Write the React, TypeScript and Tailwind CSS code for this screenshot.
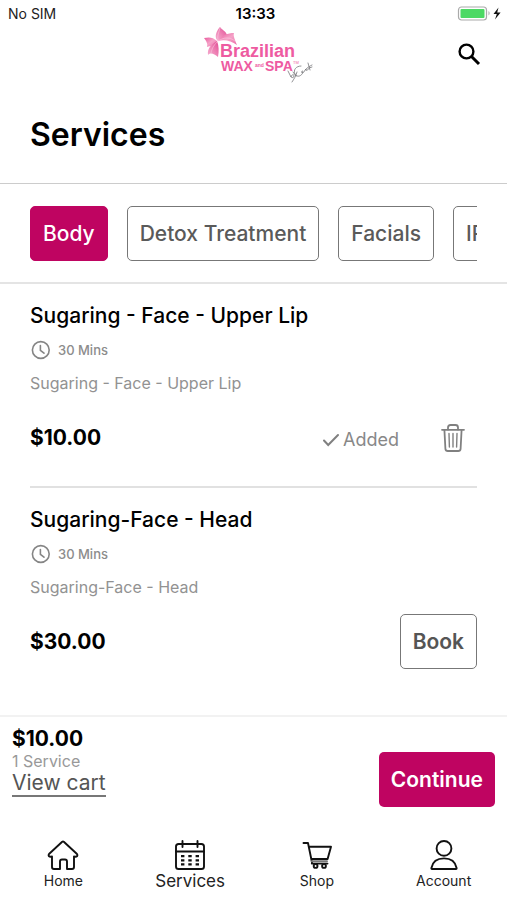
import type { ReactNode } from "react";

type Service = {
  name: string;
  duration: string;
  description: string;
  price: string;
  added: boolean;
};

const categories = ["Body", "Detox Treatment", "Facials", "IPL"];

const services: Service[] = [
  {
    name: "Sugaring - Face - Upper Lip",
    duration: "30 Mins",
    description: "Sugaring - Face - Upper Lip",
    price: "$10.00",
    added: true,
  },
  {
    name: "Sugaring-Face - Head",
    duration: "30 Mins",
    description: "Sugaring-Face - Head",
    price: "$30.00",
    added: false,
  },
];

function Logo() {
  return (
    <svg
      className="overflow-visible"
      width="113"
      height="55"
      viewBox="-3 4 113 55"
      role="img"
      aria-label="Brazilian Wax and Spa"
    >
      <defs>
        <linearGradient id="petal" x1="0" y1="0" x2="1" y2="1">
          <stop offset="0" stopColor="#e9589c" />
          <stop offset="0.5" stopColor="#f5a3c8" />
          <stop offset="1" stopColor="#ec6ba8" />
        </linearGradient>
        <linearGradient id="petalDark" x1="1" y1="0" x2="0" y2="1">
          <stop offset="0" stopColor="#e14b93" />
          <stop offset="0.6" stopColor="#f08cbb" />
          <stop offset="1" stopColor="#f5aed0" />
        </linearGradient>
      </defs>
      <path d="M17 16C14 12 17 6 20 3C22 6 26 7 27 11C24 12 20 14 18 17Z" fill="url(#petalDark)" />
      <path d="M18 17C22 11 28 9 34 9C33 12 35 16 37 21C31 17 25 15 18 17Z" fill="url(#petal)" />
      <path d="M17 17C13 13 9 13 4 14C6 17 8 19 7 23C11 22 15 21 17 17Z" fill="url(#petal)" />
      <path d="M17 17C12 20 7 24 8 31C11 28 14 30 18 33C19 27 19 22 17 17Z" fill="url(#petalDark)" />
      <path d="M18 16C17 12 19 8 20 4M18 17C24 13 30 13 35 17M17 18C13 22 12 25 11 29" stroke="#fbd3e5" strokeWidth="0.5" fill="none" />
      <g fill="#ee5ba1" fontFamily="'Liberation Sans', Arial, sans-serif" fontWeight="700">
        <text x="20" y="33" fontSize="18">Brazilian</text>
        <text x="21" y="47" fontSize="14">WAX</text>
        <text x="55" y="43" fontSize="5">and</text>
        <text x="65" y="47" fontSize="14">SPA</text>
        <text x="93" y="40" fontSize="4" fontWeight="400">TM</text>
      </g>
      <g stroke="#77777b" strokeWidth="0.8" fill="none" strokeLinecap="round">
        <path d="M88 47L91 53C92 50 94 50 94 52C94 54 92 54 91 53M93 48L96 52M97 48C96 52 94 55 92 58" />
        <path d="M101 42C96 42 93 46 95 50C97 54 102 52 103 48C103 46 101 47 102 49C104 49 105 46 106 45C106 48 108 46 109 44L112 43M108 39L110 46M105 46C108 43 110 42 112 41" />
      </g>
    </svg>
  );
}

function StatusBar() {
  return (
    <div className="grid h-7 grid-cols-3 items-center pr-1 pl-2 text-sm text-[#222]">
      <span>No SIM</span>
      <span className="text-center text-[15px] font-semibold text-black">13:33</span>
      <svg className="justify-self-end" width="46" height="16" viewBox="0 1 46 16" aria-hidden="true">
        <rect x="1.5" y="2" width="28" height="13" rx="3" fill="#fff" stroke="#aaa" strokeWidth="1.2" />
        <rect x="3.5" y="4" width="24" height="9" rx="1" fill="#4cd964" />
        <path d="M31.5 6C33 6.7 33 9.8 31.5 10.5Z" fill="#aaa" />
        <path d="M41.5 2.5L36.5 9.1H39.8L38 14.5L43.6 7.5H40.2Z" fill="#111" />
      </svg>
    </div>
  );
}

function ClockIcon() {
  return (
    <svg width="20" height="20" viewBox="0 0 20 20" fill="none" stroke="#858585" strokeWidth="1.6" aria-hidden="true">
      <circle cx="10.8" cy="10" r="8.4" />
      <path d="M10.4 5.5V10.3L14 13.2" strokeLinecap="round" />
    </svg>
  );
}

function TrashIcon() {
  return (
    <svg width="24" height="30" viewBox="0 0 24 30" fill="none" stroke="#808080" strokeWidth="1.8" strokeLinecap="round" strokeLinejoin="round" aria-hidden="true">
      <path d="M1 6.8H23M3.4 6.8L4.4 25.8Q4.6 28 6.8 28H17.2Q19.4 28 19.6 25.8L20.6 6.8" />
      <path d="M7 6.5V4.5Q7 2 9.5 2H14.5Q17 2 17 4.5V6.5" />
      <path d="M8 10.5L8.4 24M12 10.5V24M16 10.5L15.6 24" strokeWidth="1.4" />
    </svg>
  );
}

function ServiceItem({ service }: { service: Service }) {
  return (
    <li className="border-b-2 border-[#e1e1e1] pt-4 pb-[21px] last:border-transparent">
      <h2 className="text-[21px] leading-8 font-medium text-black">{service.name}</h2>
      <div className="mt-2 flex items-center gap-2 text-[13px] leading-5 font-medium text-[#8c8c8c]">
        <ClockIcon />
        <span>{service.duration}</span>
      </div>
      <p className="mt-3 text-base leading-[22px] text-[#929292]">{service.description}</p>
      <div className="mt-4 flex h-[55px] items-center justify-between">
        <span className="text-[21px] font-bold text-black">{service.price}</span>
        {service.added ? (
          <div className="flex items-center gap-[42px] pr-3">
            <span className="flex items-center gap-1 pt-1 text-lg text-[#888]">
              <svg width="16" height="14" viewBox="0 0 16 14" fill="none" stroke="#808080" strokeWidth="2" aria-hidden="true">
                <path d="M1 7.5L5.2 12L15 2" strokeLinecap="round" />
              </svg>
              Added
            </span>
            <button type="button" aria-label="Remove service">
              <TrashIcon />
            </button>
          </div>
        ) : (
          <button
            type="button"
            className="h-[55px] rounded-[5px] border border-[#777] px-3 text-[21px] font-semibold text-[#555]"
          >
            Book
          </button>
        )}
      </div>
    </li>
  );
}

function NavItem({
  label,
  active,
  children,
}: {
  label: string;
  active?: boolean;
  children: ReactNode;
}) {
  return (
    <a href="#" className="flex flex-1 flex-col items-center text-[#222]">
      <svg width="32" height="32" viewBox="0 0 32 32" fill="none" stroke="#111" strokeWidth="1.9" strokeLinecap="round" strokeLinejoin="round" aria-hidden="true">
        {children}
      </svg>
      <span className={active ? "text-[17px] leading-5" : "text-sm leading-5"}>{label}</span>
    </a>
  );
}

export default function App() {
  return (
    <div className="flex min-h-screen flex-col bg-white font-[Inter,'Liberation_Sans',sans-serif]">
      <header className="border-b border-[#ccc]">
        <StatusBar />
        <div className="grid h-[55px] grid-cols-[1fr_auto_1fr] items-center">
          <span />
          <Logo />
          <button type="button" aria-label="Search" className="mr-6 justify-self-end">
            <svg width="26" height="26" viewBox="1 2 26 26" fill="none" stroke="#000" strokeWidth="2.4" aria-hidden="true">
              <circle cx="10.5" cy="10.5" r="6.9" />
              <path d="M15.5 15.5L23 23" strokeWidth="3" />
            </svg>
          </button>
        </div>
        <h1 className="px-[30px] pt-8 pb-7 text-[32px] leading-10 font-semibold text-black">Services</h1>
      </header>

      <nav aria-label="Categories" className="border-b-2 border-[#e4e4e4] px-[30px] pt-[22px] pb-[21px]">
        <div className="flex gap-[19px] overflow-hidden">
          {categories.map((category, i) => (
            <button
              key={category}
              type="button"
              className={
                i === 0
                  ? "h-[55px] shrink-0 rounded-[5px] border border-[#bf0461] bg-[#bf0461] px-3 text-[21px] font-medium text-white"
                  : "h-[55px] shrink-0 rounded-[5px] border border-[#777] px-3 text-[21px] font-medium text-[#5a5a5a]"
              }
            >
              {category}
            </button>
          ))}
        </div>
      </nav>

      <main className="flex-1 px-[30px]">
        <ul>
          {services.map((service) => (
            <ServiceItem key={service.name} service={service} />
          ))}
        </ul>
      </main>

      <footer className="border-t-2 border-[#f2f2f2]">
        <div className="flex items-end justify-between px-3 pt-2.5">
          <div className="flex flex-col items-start pb-2.5">
            <span className="text-[21px] leading-6 font-bold text-black">$10.00</span>
            <span className="text-base leading-5 text-[#999]">1 Service</span>
            <a href="#" className="border-b-2 border-[#777] text-[21px] leading-6 text-[#555]">
              View cart
            </a>
          </div>
          <button
            type="button"
            className="h-[55px] rounded-[5px] bg-[#bf0461] px-3 text-[21px] font-semibold text-white"
          >
            Continue
          </button>
        </div>
        <nav aria-label="Main" className="flex pt-8 pb-[9px]">
          <NavItem label="Home">
            <path d="M15.2 2.8Q16 2 16.8 2.8L30 15Q30.8 16 30.2 17Q29 18.2 27 17.4V28Q27 30 25 30H20V22.5Q20 20.5 18 20.5H15Q13 20.5 13 22.5V30H7Q5 30 5 28V17.4Q3 18.2 1.8 17Q1.2 16 2 15Z" />
          </NavItem>
          <NavItem label="Services" active>
            <rect x="2" y="5" width="28" height="25" rx="2.6" />
            <path d="M2 12.5H30M8.5 2V8M23.5 2V8" />
            <path d="M7 17.2H10.4M14.3 17.2H17.7M21.6 17.2H25M7 21.3H10.4M14.3 21.3H17.7M21.6 21.3H25M7 25.4H10.4M14.3 25.4H17.7M21.6 25.4H25" strokeWidth="2.2" strokeLinecap="butt" />
          </NavItem>
          <NavItem label="Shop">
            <path d="M2.5 4H7L11 23.5M8 7.8H30L26.6 20H10.5" />
            <path d="M10.8 22.3H26" stroke="#777" />
            <path d="M10.8 24.6H26.5" />
            <circle cx="14.6" cy="27" r="1.9" />
            <circle cx="23" cy="27" r="1.9" />
          </NavItem>
          <NavItem label="Account">
            <circle cx="16" cy="9.4" r="7.4" />
            <path d="M4 30H28Q28.8 30 28.6 29C27.4 22.8 22.8 19.4 16 19.4S4.6 22.8 3.4 29Q3.2 30 4 30Z" />
          </NavItem>
        </nav>
      </footer>
    </div>
  );
}
